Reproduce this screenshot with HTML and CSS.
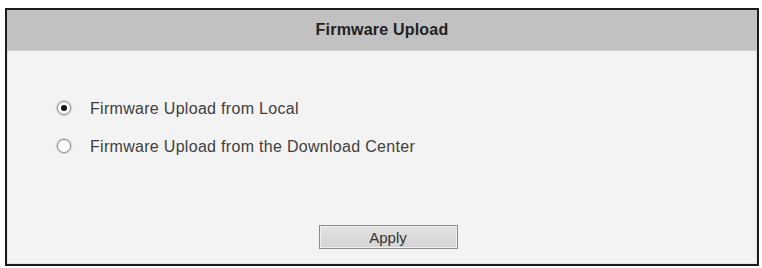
FILE: index.html
```html
<!DOCTYPE html>
<html lang="en">
  <head>
    <meta charset="UTF-8" />
    <title>Firmware Upload</title>
    <link rel="stylesheet" href="styles.css">
  </head>
  <body>
    <div class="panel">
      <div class="panel-title">Firmware Upload</div>

      <div class="panel-body">
        <div class="options">
          <label class="option">
            <input type="radio" name="source" value="local" checked />
            <span>Firmware Upload from Local</span>
          </label>
          <label class="option">
            <input type="radio" name="source" value="center" />
            <span>Firmware Upload from the Download Center</span>
          </label>
        </div>

        <div class="actions">
          <button type="button" class="apply-btn">Apply</button>
        </div>
      </div>
    </div>
  </body>
</html>
```

FILE: styles.css
```css
body {
  margin: 0;
  padding: 8px 0 0 5px;
  background: #ffffff;
  font-family: "Liberation Sans", Arial, sans-serif;
  color: #333;
}

.panel {
  width: 750px;
  height: 254px;
  border: 2px solid #1c1c1c;
  background: #f3f3f3;
  box-shadow: inset 0 0 0 1px #e2e2e2;
  display: flex;
  flex-direction: column;
}

.panel-title {
  height: 40px;
  background: #c1c1c1;
  border-bottom: 1px solid #cfcfcf;
  display: flex;
  align-items: center;
  justify-content: center;
  font-size: 16px;
  font-weight: bold;
  color: #222;
  letter-spacing: 0.2px;
}

.panel-body {
  flex: 1;
  display: flex;
  flex-direction: column;
  justify-content: space-between;
  padding: 39px 0 15px 0;
}

.options {
  display: flex;
  flex-direction: column;
  padding-left: 50px;
}

.option {
  display: flex;
  align-items: center;
  height: 38px;
  font-size: 16px;
  color: #404040;
  letter-spacing: 0.3px;
}

.option input[type="radio"] {
  appearance: none;
  -webkit-appearance: none;
  width: 14px;
  height: 14px;
  margin: -3px 19px 0 0;
  border: 1px solid #8a8a8a;
  border-radius: 50%;
  background: #fff;
  box-shadow: 0 0 1px 1px #d4d4d4;
  display: flex;
  align-items: center;
  justify-content: center;
}

.option input[type="radio"]:checked::after {
  content: "";
  width: 6px;
  height: 6px;
  border-radius: 50%;
  background: #111;
}

.actions {
  display: flex;
  justify-content: center;
}

.apply-btn {
  width: 139px;
  height: 24px;
  margin-left: 12px;
  font-family: "Liberation Sans", Arial, sans-serif;
  font-size: 15px;
  color: #333;
  background: linear-gradient(#e2e2e2, #d4d4d4);
  border: 1px solid #8c8c8c;
  border-radius: 0;
  box-shadow: inset 0 0 0 1px #efefef;
  padding: 0;
}
```
